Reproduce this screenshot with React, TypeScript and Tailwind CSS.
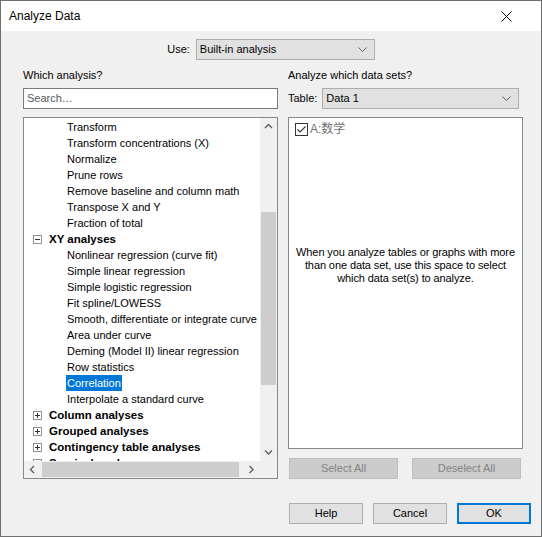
import React from 'react';

// Rows of the analysis tree, in display order
type TreeRow =
  | { kind: 'group'; label: string; open: boolean }
  | { kind: 'item'; label: string; selected?: boolean };

const treeRows: TreeRow[] = [
  { kind: 'item', label: 'Transform' },
  { kind: 'item', label: 'Transform concentrations (X)' },
  { kind: 'item', label: 'Normalize' },
  { kind: 'item', label: 'Prune rows' },
  { kind: 'item', label: 'Remove baseline and column math' },
  { kind: 'item', label: 'Transpose X and Y' },
  { kind: 'item', label: 'Fraction of total' },
  { kind: 'group', label: 'XY analyses', open: true },
  { kind: 'item', label: 'Nonlinear regression (curve fit)' },
  { kind: 'item', label: 'Simple linear regression' },
  { kind: 'item', label: 'Simple logistic regression' },
  { kind: 'item', label: 'Fit spline/LOWESS' },
  { kind: 'item', label: 'Smooth, differentiate or integrate curve' },
  { kind: 'item', label: 'Area under curve' },
  { kind: 'item', label: 'Deming (Model II) linear regression' },
  { kind: 'item', label: 'Row statistics' },
  { kind: 'item', label: 'Correlation', selected: true },
  { kind: 'item', label: 'Interpolate a standard curve' },
  { kind: 'group', label: 'Column analyses', open: false },
  { kind: 'group', label: 'Grouped analyses', open: false },
  { kind: 'group', label: 'Contingency table analyses', open: false },
  { kind: 'group', label: 'Survival analyses', open: false },
];

const Arrow = ({ dir }: { dir: 'up' | 'down' | 'left' | 'right' }) => {
  const pts = {
    up: '1,5 4.5,1.5 8,5',
    down: '1,1.5 4.5,5 8,1.5',
    left: '5,1 1.5,4.5 5,8',
    right: '1.5,1 5,4.5 1.5,8',
  }[dir];
  const horiz = dir === 'up' || dir === 'down';
  return (
    <svg width={horiz ? 9 : 7} height={horiz ? 7 : 9} viewBox={horiz ? '0 0 9 7' : '0 0 7 9'}>
      <polyline points={pts} fill="none" stroke="#606060" strokeWidth="1.4" />
    </svg>
  );
};

const ComboChevron = () => (
  <svg width="9" height="5" viewBox="0 0 9 5">
    <polyline points="0.5,0.5 4.5,4.5 8.5,0.5" fill="none" stroke="#606060" strokeWidth="1" />
  </svg>
);

const Expander = ({ open }: { open: boolean }) => (
  <span className="w-[9px] h-[9px] border border-[#919191] bg-white flex items-center justify-center shrink-0">
    <svg width="7" height="7" viewBox="0 0 7 7">
      <path d="M1 3.5h5" stroke="#333" strokeWidth="1" />
      {!open && <path d="M3.5 1v5" stroke="#333" strokeWidth="1" />}
    </svg>
  </span>
);

const Combo = ({ value, width }: { value: string; width: string }) => (
  <div className={`${width} h-[21px] border border-[#adadad] bg-[#e1e1e1] flex items-center justify-between pl-[3px] pr-[7px]`}>
    <span>{value}</span>
    <ComboChevron />
  </div>
);

const Button = ({ label, primary, disabled, width }: { label: string; primary?: boolean; disabled?: boolean; width: string }) => (
  <button
    className={`${width} h-[21px] flex items-center justify-center ${
      disabled
        ? 'bg-[#cccccc] border border-[#bfbfbf] text-[#838383]'
        : primary
        ? 'bg-[#e1e1e1] border-2 border-[#0078d7] text-black'
        : 'bg-[#e1e1e1] border border-[#adadad] text-black'
    }`}
  >
    {label}
  </button>
);

function AnalysisTree() {
  return (
    <div className="mt-[8px] h-[362px] border border-[#828790] bg-white flex flex-col">
      <div className="h-[343px] flex">
        <div className="flex-1 overflow-hidden pt-[1px]">
          {treeRows.map((row) =>
            row.kind === 'group' ? (
              <div key={row.label} className="h-[16px] flex items-center pl-[9px] whitespace-nowrap">
                <Expander open={row.open} />
                <span className="ml-[7px] font-bold text-[11.5px] leading-[16px]">{row.label}</span>
              </div>
            ) : (
              <div key={row.label} className="h-[16px] flex items-stretch pl-[42px] whitespace-nowrap">
                <span
                  className={`px-[1px] flex items-center ${row.selected ? 'bg-[#0078d7] text-white' : ''}`}
                >
                  {row.label}
                </span>
              </div>
            )
          )}
        </div>
        {/* vertical scrollbar */}
        <div className="w-[17px] bg-[#f0f0f0] flex flex-col">
          <div className="h-[17px] flex items-center justify-center">
            <Arrow dir="up" />
          </div>
          <div className="flex-1 pt-[77px]">
            <div className="h-[173px] mx-[1px] bg-[#cdcdcd]" />
          </div>
          <div className="h-[17px] flex items-center justify-center">
            <Arrow dir="down" />
          </div>
        </div>
      </div>
      {/* horizontal scrollbar */}
      <div className="h-[17px] flex bg-[#f0f0f0]">
        <div className="w-[17px] flex items-center justify-center">
          <Arrow dir="left" />
        </div>
        <div className="flex-1 py-[1px] pl-[1px]">
          <div className="w-[197px] h-full bg-[#cdcdcd]" />
        </div>
        <div className="w-[17px] flex items-center justify-center">
          <Arrow dir="right" />
        </div>
        <div className="w-[17px]" />
      </div>
    </div>
  );
}

export default function App() {
  return (
    <div className="w-[542px] h-[537px] border border-[#707070] bg-[#f0f0f0] flex flex-col text-[11px] text-black font-['Liberation_Sans','Noto_Sans_CJK_SC',sans-serif]">
      {/* title bar */}
      <div className="h-[30px] bg-white flex items-center justify-between pl-[8px] pr-[29px]">
        <span className="text-[12px]">Analyze Data</span>
        <svg width="11" height="11" viewBox="0 0 11 11">
          <path d="M0.5 0.5 L10.5 10.5 M10.5 0.5 L0.5 10.5" stroke="#000" strokeWidth="1" />
        </svg>
      </div>

      <div className="flex-1 flex flex-col pl-[22px]">
        <div className="mt-[8px] h-[21px] flex items-center justify-center gap-[6px] pr-[22px]">
          <span>Use:</span>
          <Combo value="Built-in analysis" width="w-[179px]" />
        </div>

        <div className="mt-[7px] flex gap-[10px]">
          {/* left: analysis picker */}
          <div className="w-[255px] flex flex-col">
            <div className="h-[16px] leading-[16px]">Which analysis?</div>
            <div className="mt-[5px] h-[21px] border border-[#7a7a7a] bg-white flex items-center pl-[3px] text-[#5a5a5a]">
              Search…
            </div>
            <AnalysisTree />
          </div>

          {/* right: data set picker */}
          <div className="w-[235px] flex flex-col">
            <div className="h-[16px] leading-[16px]">Analyze which data sets?</div>
            <div className="mt-[5px] h-[21px] flex items-center gap-[5px]">
              <span>Table:</span>
              <Combo value="Data 1" width="w-[197px]" />
            </div>
            <div className="mt-[8px] h-[332px] border border-[#828790] bg-white flex flex-col">
              <div className="pt-[4px] pl-[6px] flex items-center gap-[2px]">
                <span className="w-[13px] h-[13px] border border-[#333] bg-white flex items-center justify-center">
                  <svg width="11" height="11" viewBox="0 0 11 11">
                    <polyline points="1.5,5.5 4,8 9.5,2.5" fill="none" stroke="#333" strokeWidth="1.1" />
                  </svg>
                </span>
                <span className="text-[12px] leading-[14px] text-[#707070]">A:数学</span>
              </div>
              <p className="mt-[110px] text-center leading-[13px] whitespace-nowrap tracking-[-0.1px]">
                When you analyze tables or graphs with more
                <br />
                than one data set, use this space to select
                <br />
                which data set(s) to analyze.
              </p>
            </div>
            <div className="mt-[9px] pl-[1px] flex gap-[14px]">
              <Button label="Select All" disabled width="w-[109px]" />
              <Button label="Deselect All" disabled width="w-[109px]" />
            </div>
          </div>
        </div>

        <div className="mt-[24px] flex justify-end gap-[10px] pr-[10px]">
          <Button label="Help" width="w-[74px]" />
          <Button label="Cancel" width="w-[74px]" />
          <Button label="OK" primary width="w-[74px]" />
        </div>
      </div>
    </div>
  );
}
